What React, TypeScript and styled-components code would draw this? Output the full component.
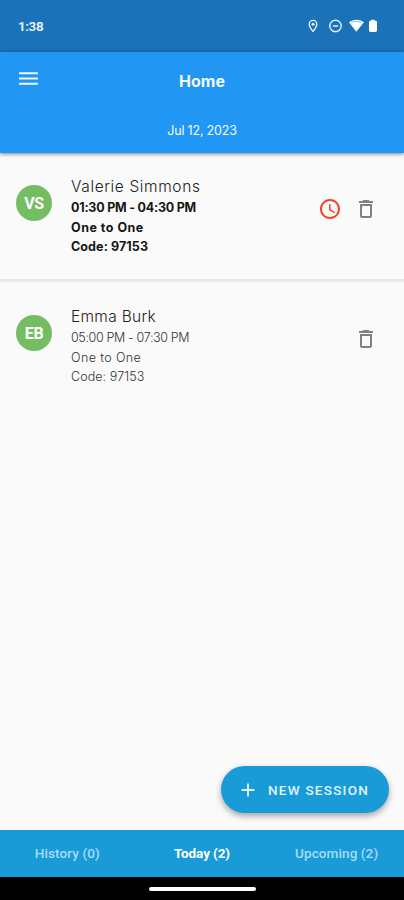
import React from "react";
import styled, { createGlobalStyle } from "styled-components";
import { MdMenu, MdDeleteOutline, MdAccessTime, MdAdd } from "react-icons/md";

const GlobalStyle = createGlobalStyle`
  * { box-sizing: border-box; }
  body { margin: 0; background: #fafafa; }
`;

const Screen = styled.div`
  width: 404px;
  height: 900px;
  display: flex;
  flex-direction: column;
  position: relative;
  overflow: hidden;
  background: #fafafa;
  font-family: Inter, Roboto, sans-serif;
`;

const StatusBar = styled.div`
  height: 52px;
  flex: none;
  display: flex;
  align-items: center;
  justify-content: space-between;
  padding: 0 26px 0 18px;
  background: #1b72b8;
  color: #e9f5ff;
`;

const Clock = styled.span`
  font: 600 13.5px/16px Roboto, sans-serif;
  letter-spacing: -0.4px;
`;

const StatusIcons = styled.svg`
  display: block;
`;

const AppBar = styled.header`
  height: 101px;
  flex: none;
  z-index: 1;
  display: grid;
  grid-template-columns: 56px 1fr 56px;
  grid-template-rows: 58px 43px;
  align-items: center;
  justify-items: center;
  background: #2196f3;
  color: #f2faff;
  box-shadow: 0 1px 4px rgba(0, 0, 0, 0.5);
`;

const MenuButton = styled.button`
  display: flex;
  border: 0;
  padding: 0;
  margin: -5px 0 0 0;
  background: none;
  color: inherit;
`;

const Title = styled.h1`
  margin: 0;
  font-size: 16px;
  line-height: 20px;
  font-weight: 700;
  letter-spacing: 0;
`;

const DateLabel = styled.div`
  grid-row: 2;
  grid-column: 2;
  margin-top: -1px;
  font-size: 12.5px;
  line-height: 18px;
  letter-spacing: -0.2px;
`;

const List = styled.main`
  flex: 1;
`;

const Row = styled.article`
  height: 129px;
  display: flex;
  border-bottom: 3px solid #e9e9e9;
  padding: 23px 26px 0 16px;

  & + & {
    height: 127px;
    padding-top: 24px;
    border: 0;
  }
`;

const Avatar = styled.div`
  width: 36px;
  height: 36px;
  flex: none;
  margin: 9px 19px 0 0;
  border-radius: 50%;
  display: flex;
  align-items: center;
  justify-content: center;
  padding-top: 1px;
  background: #74bd62;
  color: #fff;
  font: 700 16px/20px Roboto, sans-serif;
  letter-spacing: -0.3px;
`;

const Details = styled.div`
  flex: 1;
`;

const Name = styled.div<{ $spacing: number }>`
  font-size: 15.5px;
  line-height: 21px;
  margin-bottom: 1px;
  font-weight: 300;
  color: #222;
  letter-spacing: ${(p) => p.$spacing}px;
`;

const Line = styled.div<{ $bold: boolean; $spacing: number }>`
  font-size: 12.5px;
  line-height: 19.7px;
  font-weight: ${(p) => (p.$bold ? 700 : 300)};
  color: ${(p) => (p.$bold ? "#161616" : "#333")};
  letter-spacing: ${(p) => p.$spacing}px;
`;

const Actions = styled.div`
  display: flex;
  gap: 12px;
  margin-top: 21px;
  height: 24px;
  color: #808080;
`;

const LateIcon = styled(MdAccessTime)`
  color: #f4431f;
`;

const NewSession = styled.button`
  position: absolute;
  right: 15px;
  bottom: 87px;
  width: 168px;
  height: 47px;
  border: 0;
  border-radius: 24px;
  padding: 0 0 0 16px;
  display: flex;
  align-items: center;
  gap: 9px;
  background: #199bd8;
  color: #e2f4ff;
  box-shadow: 0 3px 6px rgba(0, 0, 0, 0.35);
  font: 500 13.5px/18px Roboto, sans-serif;
  letter-spacing: 1.25px;
  white-space: nowrap;
`;

const Tabs = styled.nav`
  height: 47px;
  flex: none;
  display: grid;
  grid-template-columns: repeat(3, 1fr);
  align-items: center;
  justify-items: center;
  padding-bottom: 2px;
  background: #199bd8;
`;

const Tab = styled.span<{ $active?: boolean }>`
  font: ${(p) => (p.$active ? 700 : 500)} 13.5px/18px Roboto, sans-serif;
  color: ${(p) => (p.$active ? "#fff" : "#a8dcf8")};
  letter-spacing: ${(p) => (p.$active ? -0.1 : 0.1)}px;
`;

const SystemBar = styled.div`
  height: 23px;
  flex: none;
  display: flex;
  align-items: center;
  justify-content: center;
  background: #000;
`;

const HomeHandle = styled.div`
  width: 107px;
  height: 4px;
  border-radius: 2px;
  background: #fff;
`;

const sessions = [
  {
    initials: "VS",
    name: "Valerie Simmons",
    nameSpacing: 0.62,
    lines: [
      { text: "01:30 PM - 04:30 PM", spacing: -0.22 },
      { text: "One to One", spacing: 0.5 },
      { text: "Code: 97153", spacing: 0.1 },
    ],
    late: true,
  },
  {
    initials: "EB",
    name: "Emma Burk",
    nameSpacing: 0.3,
    lines: [
      { text: "05:00 PM - 07:30 PM", spacing: -0.35 },
      { text: "One to One", spacing: 0.4 },
      { text: "Code: 97153", spacing: 0.08 },
    ],
    late: false,
  },
];

export default function App() {
  return (
    <Screen>
      <GlobalStyle />
      <StatusBar>
        <Clock>1:38</Clock>
        <StatusIcons width="70" height="14" viewBox="0 0 70 14" fill="none">
          <path d="M5 12.4C2.8 9.7 1.2 7.6 1.2 5.2a3.8 3.8 0 0 1 7.6 0c0 2.4-1.6 4.5-3.8 7.2Z" stroke="#e4f2fc" strokeWidth="1.4" />
          <circle cx="5" cy="5.2" r="1.5" fill="#e4f2fc" />
          <circle cx="27.5" cy="7" r="5.7" stroke="#e4f2fc" strokeWidth="1.4" />
          <path d="M24.8 7h5.4" stroke="#e4f2fc" strokeWidth="1.5" />
          <path d="M41 3.3C45-.1 52-.1 56 3.3L48.3 12.8Z" fill="#fff" />
          <path d="M43.4 3.7c3-1.8 7-1.8 10 0" stroke="#90b9dc" strokeWidth="1" />
          <path d="M63.2 1.8V.8h3.4v1h1a1.4 1.4 0 0 1 1.4 1.4v8.4a1.4 1.4 0 0 1-1.4 1.4h-5.2a1.4 1.4 0 0 1-1.4-1.4V3.2a1.4 1.4 0 0 1 1.4-1.4Z" fill="#fff" />
        </StatusIcons>
      </StatusBar>
      <AppBar>
        <MenuButton aria-label="Menu">
          <MdMenu size={25} />
        </MenuButton>
        <Title>Home</Title>
        <DateLabel>Jul 12, 2023</DateLabel>
      </AppBar>
      <List>
        {sessions.map((s) => (
          <Row key={s.initials}>
            <Avatar>{s.initials}</Avatar>
            <Details>
              <Name $spacing={s.nameSpacing}>{s.name}</Name>
              {s.lines.map((l) => (
                <Line key={l.text} $bold={s.late} $spacing={l.spacing}>
                  {l.text}
                </Line>
              ))}
            </Details>
            <Actions>
              {s.late && <LateIcon size={24} />}
              <MdDeleteOutline size={24} />
            </Actions>
          </Row>
        ))}
      </List>
      <Tabs>
        <Tab>History (0)</Tab>
        <Tab $active>Today (2)</Tab>
        <Tab>Upcoming (2)</Tab>
      </Tabs>
      <SystemBar>
        <HomeHandle />
      </SystemBar>
      <NewSession>
        <MdAdd size={22} />
        NEW SESSION
      </NewSession>
    </Screen>
  );
}
